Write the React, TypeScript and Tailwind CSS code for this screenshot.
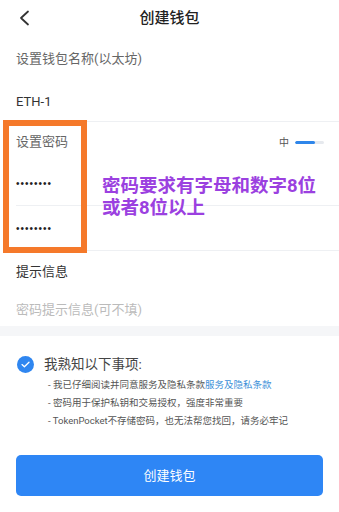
import React from 'react';

const font = { fontFamily: 'Roboto, "Noto Sans CJK SC", sans-serif' };

const Dots: React.FC = () => (
  <span className="text-[10px] tracking-[1px] text-[#222] font-['Liberation_Sans','Noto_Sans_CJK_SC',sans-serif]">
    ••••••••
  </span>
);

const App: React.FC = () => {
  return (
    <div
      className="relative w-[339px] h-[512px] bg-white overflow-hidden font-['Roboto','Noto_Sans_CJK_SC',sans-serif]"
      style={font}
    >
      {/* header */}
      <div className="relative h-9 flex items-center justify-center">
        <svg className="absolute left-[18px] top-[10px]" width="12" height="16" viewBox="0 0 12 16" fill="none">
          <path d="M10 1.5 L3 8 L10 14.5" stroke="#333" strokeWidth="1.8" strokeLinecap="round" strokeLinejoin="round" />
        </svg>
        <span className="text-[15px] font-medium text-[#222]">创建钱包</span>
      </div>

      {/* wallet name */}
      <div className="pl-4">
        <div className="h-[46px] flex items-center text-[13px] text-[#666]">设置钱包名称(以太坊)</div>
        <div className="h-[40px] flex items-center text-[13px] text-[#333] border-b border-[#eef0f3]">ETH-1</div>
      </div>

      {/* password */}
      <div className="pl-4">
        <div className="h-[40px] flex items-center justify-between pr-[15px]">
          <span className="text-[13px] text-[#666]">设置密码</span>
          <div className="flex items-center gap-[6px]">
            <span className="text-[10px] text-[#555]">中</span>
            <div className="w-[29px] h-[3px] rounded-full bg-[#e6e9ee] overflow-hidden">
              <div className="w-[20px] h-full rounded-full bg-[#2f86ea]" />
            </div>
          </div>
        </div>
        <div className="h-[44px] flex items-center border-b border-[#eef0f3]">
          <Dots />
        </div>
        <div className="h-[45px] flex items-center border-b border-[#eef0f3]">
          <Dots />
        </div>
      </div>

      {/* hint */}
      <div className="pl-4">
        <div className="h-[42px] flex items-center text-[13px] text-[#333]">提示信息</div>
        <div className="h-[33px] flex items-center text-[13px] text-[#bbbbbb]">密码提示信息(可不填)</div>
      </div>
      <div className="h-[10px] bg-[#f5f6f8]" />

      {/* notice */}
      <div className="pl-[17px] pt-[18px]">
        <div className="flex items-center gap-[10px]">
          <div className="w-[17px] h-[17px] rounded-full bg-[#2f86f0] flex items-center justify-center">
            <svg width="9" height="7" viewBox="0 0 9 7" fill="none">
              <path d="M1 3.6 L3.4 5.8 L8 1.2" stroke="white" strokeWidth="1.3" strokeLinecap="round" strokeLinejoin="round" />
            </svg>
          </div>
          <span className="text-[13.5px] text-[#444]">我熟知以下事项:</span>
        </div>
        <div className="pl-[31px] pt-[2px] text-[9.5px] text-[#555] leading-[18px]">
          <div>
            - 我已仔细阅读并同意服务及隐私条款<span className="text-[#3a8fd8]">服务及隐私条款</span>
          </div>
          <div>- 密码用于保护私钥和交易授权，强度非常重要</div>
          <div>- TokenPocket不存储密码，也无法帮您找回，请务必牢记</div>
        </div>
      </div>

      {/* button */}
      <div className="px-4 pt-[25px]">
        <button className="w-full h-[41px] rounded-[5px] bg-[#2e86f5] text-white text-[13px]">创建钱包</button>
      </div>

      {/* annotation overlays */}
      <div className="absolute left-[3px] top-[120px] w-[84px] h-[133px] border-[6px] border-[#f5792a] pointer-events-none" />
      <div className="absolute left-[102px] top-[175px] text-[18.5px] font-bold leading-[22px] text-[#9b40e0]">
        <div>密码要求有字母和数字8位</div>
        <div>或者8位以上</div>
      </div>
    </div>
  );
};

export default App;
